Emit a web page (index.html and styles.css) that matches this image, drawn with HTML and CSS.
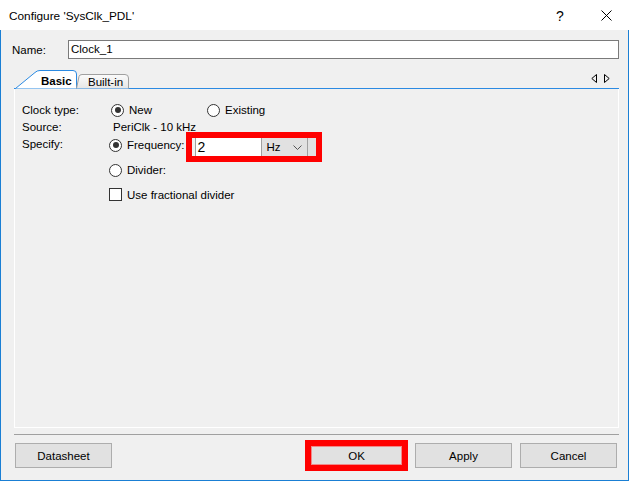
FILE: index.html
```html
<!DOCTYPE html>
<html>
<head>
  <title>Configure 'SysClk_PDL'</title>
  <link rel="stylesheet" href="styles.css">
</head>
<body>
  <div class="window">
    <!-- Title bar -->
    <div class="titlebar">
      <span class="title">Configure 'SysClk_PDL'</span>
      <span class="tb-btn tb-help">?</span>
      <span class="tb-btn">
        <svg width="11" height="11" viewBox="0 0 11 11"><path d="M0.5 0.5 L10.5 10.5 M10.5 0.5 L0.5 10.5" stroke="#000" stroke-width="1" fill="none"/></svg>
      </span>
    </div>

    <div class="content">
      <div class="name-row">
        <span class="name-label">Name:</span>
        <div class="textbox">Clock_1</div>
      </div>

      <!-- Tabs -->
      <div class="tabs">
        <div class="tab tab-active">
          <svg width="62" height="19" viewBox="0 0 62 19">
            <path d="M0.5 18.5 L20 2.5 Q22 0.5 25 0.5 L58 0.5 Q61.5 0.5 61.5 4 L61.5 18.5" fill="#fff" stroke="#2b8ae2"/>
          </svg>
          <span class="tab-text">Basic</span>
        </div>
        <div class="tab tab-inactive">
          <svg width="54" height="15" viewBox="0 0 54 15">
            <defs>
              <linearGradient id="tabgrad" x1="0" y1="0" x2="0" y2="1">
                <stop offset="0" stop-color="#fbfbfb"/>
                <stop offset="1" stop-color="#e6e6e6"/>
              </linearGradient>
            </defs>
            <path d="M0.5 14.5 L3 2.5 Q3.5 0.5 6 0.5 L49 0.5 Q52.5 0.5 52.5 4 L52.5 14.5" fill="url(#tabgrad)" stroke="#a0a0a0"/>
          </svg>
          <span class="tab-text">Built-in</span>
        </div>
        <svg class="tab-arrows" width="19" height="9" viewBox="0 0 19 9">
          <path d="M5.5 0.5 L0.8 4.5 L5.5 8.5 Z" fill="none" stroke="#000"/>
          <path d="M13.5 0.5 L18.2 4.5 L13.5 8.5 Z" fill="none" stroke="#000"/>
        </svg>
      </div>

      <!-- Basic tab page -->
      <div class="panel">
        <div class="row row-type">
          <span class="lbl">Clock type:</span>
          <span class="opt opt-new"><span class="radio checked"></span>New</span>
          <span class="opt"><span class="radio"></span>Existing</span>
        </div>
        <div class="row row-source">
          <span class="lbl">Source:</span>
          <span class="value">PeriClk - 10 kHz</span>
        </div>
        <div class="row row-specify">
          <span class="lbl">Specify:</span>
          <span class="opt opt-freq"><span class="radio checked"></span>Frequency:</span>
          <div class="highlight">
            <div class="freq-group">
              <div class="freq-input">2</div>
              <div class="freq-unit">
                <span>Hz</span>
                <svg width="9" height="5" viewBox="0 0 9 5"><path d="M0.5 0.5 L4.5 4.5 L8.5 0.5" fill="none" stroke="#555"/></svg>
              </div>
              <div class="freq-tail"></div>
            </div>
          </div>
        </div>
        <div class="row row-divider">
          <span class="lbl"></span>
          <span class="opt"><span class="radio"></span>Divider:</span>
        </div>
        <div class="row row-frac">
          <span class="lbl"></span>
          <span class="opt"><span class="check"></span>Use fractional divider</span>
        </div>
      </div>

      <div class="separator"></div>

      <div class="buttons">
        <div class="btn btn-datasheet">Datasheet</div>
        <div class="highlight highlight-ok">
          <div class="btn btn-ok">OK</div>
        </div>
        <div class="btn btn-apply">Apply</div>
        <div class="btn btn-cancel">Cancel</div>
      </div>
    </div>
  </div>
</body>
</html>
```

FILE: styles.css
```css
html, body {
  margin: 0;
  padding: 0;
}

body {
  width: 629px;
  height: 481px;
  background: #f0f0f0;
  font-family: "Liberation Sans", Arial, sans-serif;
  font-size: 11.5px;
  color: #000;
  overflow: hidden;
}

.window {
  box-sizing: border-box;
  width: 629px;
  height: 481px;
  border-left: 1px solid #1a7fd4;
  border-right: 1px solid #1a7fd4;
  border-bottom: 1px solid #1a7fd4;
  background: #f0f0f0;
}

.titlebar {
  height: 30px;
  background: #fff;
  display: flex;
  align-items: center;
  margin: 0 -1px;
}

.title {
  padding-left: 9px;
  font-size: 11.8px;
  flex: 1;
  padding-top: 2px;
}

.tb-btn {
  width: 46px;
  height: 30px;
  display: flex;
  align-items: center;
  justify-content: center;
}

.tb-help {
  font-size: 14px;
  padding-top: 1px;
}

.content {
  padding: 0 9px 0 13px;
}

.name-row {
  display: flex;
  align-items: center;
  margin-top: 10px;
  margin-left: -2px;
}

.name-label {
  width: 56px;
}

.textbox {
  flex: 1;
  box-sizing: border-box;
  height: 19px;
  line-height: 17px;
  border: 1px solid #7a7a7a;
  background: #fff;
  padding-left: 2px;
}

.tabs {
  display: flex;
  align-items: flex-end;
  height: 18px;
  margin-top: 11px;
  padding-left: 1px;
  border-bottom: 1px solid #2b8ae2;
}

.tab {
  display: grid;
  margin-bottom: -1px;
}

.tab > * {
  grid-area: 1 / 1;
}

.tab-text {
  align-self: center;
}

.tab-active .tab-text {
  font-weight: bold;
  padding-left: 26px;
  padding-top: 2px;
}

.tab-inactive {
  margin-left: -1px;
}

.tab-inactive .tab-text {
  padding-left: 12px;
  padding-top: 1px;
}

.tab-arrows {
  margin-left: auto;
  margin-right: 9px;
  align-self: flex-start;
  margin-top: 4px;
}

.panel {
  box-sizing: border-box;
  height: 339px;
  border-left: 1px solid #fff;
  border-right: 1px solid #fff;
  border-bottom: 1px solid #fff;
  padding: 12px 0 0 7px;
}

.row {
  display: flex;
  align-items: center;
}

.lbl {
  width: 87px;
  flex: none;
}

.opt {
  display: flex;
  align-items: center;
  gap: 5px;
}

.radio {
  box-sizing: border-box;
  width: 13px;
  height: 13px;
  border: 1px solid #333;
  border-radius: 50%;
  background: #fff;
  display: flex;
  align-items: center;
  justify-content: center;
}

.radio.checked::after {
  content: "";
  width: 6px;
  height: 6px;
  border-radius: 50%;
  background: #333;
}

.check {
  box-sizing: border-box;
  width: 13px;
  height: 13px;
  border: 1px solid #333;
  background: #fff;
}

.row-type {
  height: 18px;
}

.opt-new {
  width: 96px;
  margin-left: 2px;
}

.row-source {
  height: 16px;
}

.value {
  margin-left: 4px;
}

.row-specify {
  height: 27px;
  align-items: flex-start;
}

.row-specify .lbl {
  line-height: 18px;
}

.opt-freq {
  height: 18px;
  margin-top: 1px;
}

.highlight {
  border: 6px solid #ff0000;
}

.row-specify .highlight {
  margin-top: -3px;
  margin-left: 1px;
}

.freq-group {
  display: flex;
  height: 18px;
  padding-left: 3px;
  background: #f0f0f0;
}

.freq-input {
  width: 66px;
  background: #fff;
  border-left: 1px solid #a0a0a0;
  font-size: 14px;
  line-height: 19px;
  padding-left: 2px;
  box-sizing: border-box;
}

.freq-unit {
  width: 46px;
  box-sizing: border-box;
  background: #e1e1e1;
  border-left: 1px solid #a0a0a0;
  display: flex;
  align-items: center;
  padding-left: 5px;
  gap: 12px;
}

.freq-tail {
  width: 9px;
  box-sizing: border-box;
  background: #e1e1e1;
  border-left: 1px solid #a0a0a0;
}

.row-divider {
  height: 16px;
}

.row-frac {
  height: 17px;
  margin-top: 8px;
}

.separator {
  height: 1px;
  background: #a0a0a0;
  margin-top: 6px;
}

.buttons {
  display: flex;
  align-items: center;
  height: 31px;
  margin-top: 5px;
  padding: 0 2px 0 1px;
}

.btn {
  box-sizing: border-box;
  width: 97px;
  height: 25px;
  border: 1px solid #adadad;
  background: #e1e1e1;
  display: flex;
  align-items: center;
  justify-content: center;
}

.btn-datasheet {
  margin-right: auto;
}

.highlight-ok {
  width: 103px;
  height: 31px;
  box-sizing: border-box;
}

.btn-ok {
  width: 91px;
  height: 19px;
  border-color: #f08a8a;
}

.btn-apply {
  margin-left: 7px;
}

.btn-cancel {
  margin-left: 8px;
}
```
